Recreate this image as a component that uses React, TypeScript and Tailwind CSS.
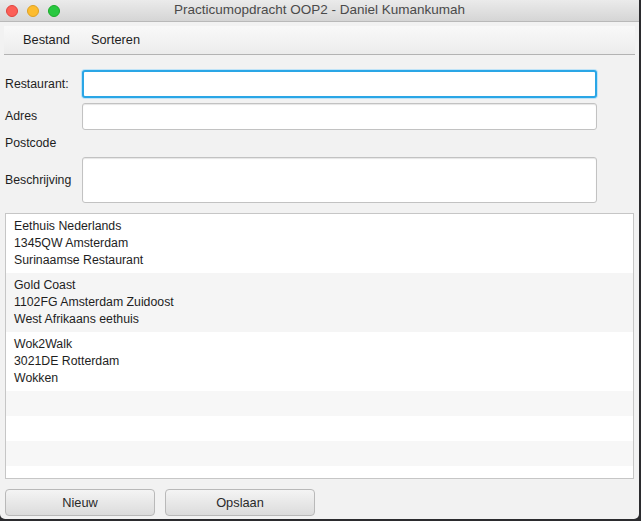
import React from "react"

type Restaurant = {
  naam: string
  adres: string
  beschrijving: string
}

const restaurants: Restaurant[] = [
  { naam: "Eethuis Nederlands", adres: "1345QW Amsterdam", beschrijving: "Surinaamse Restaurant" },
  { naam: "Gold Coast", adres: "1102FG Amsterdam Zuidoost", beschrijving: "West Afrikaans eethuis" },
  { naam: "Wok2Walk", adres: "3021DE Rotterdam", beschrijving: "Wokken" },
]

function Field({ label, children, className = "" }: { label: string; children?: React.ReactNode; className?: string }) {
  return (
    <div className={`flex items-center ${className}`}>
      <div className="w-[77px] shrink-0">{label}</div>
      {children}
    </div>
  )
}

export default function App() {
  return (
    <div
      className="w-[641px] h-[521px] bg-[#2b2b2e] overflow-hidden text-[12.3px] text-[#1e1e1e]"
      style={{ fontFamily: "'Liberation Sans', Arial, sans-serif" }}
    >
      <div className="w-[639px] h-[519px] bg-[#f2f2f2] rounded-b-[5px] flex flex-col">
        {/* title bar */}
        <div className="h-[22px] shrink-0 flex items-center relative bg-gradient-to-b from-[#ebebeb] to-[#d5d5d5] border-b border-[#b9b9b9]">
          <div className="flex gap-[9px] pl-[6px]">
            <span className="w-[12px] h-[12px] rounded-full bg-[#fc5f57] border border-[#e0443e]" />
            <span className="w-[12px] h-[12px] rounded-full bg-[#fdbc2e] border border-[#dea123]" />
            <span className="w-[12px] h-[12px] rounded-full bg-[#28c840] border border-[#1aab29]" />
          </div>
          <div className="absolute inset-0 flex items-center justify-center text-[13.5px] text-[#4a4a4a]">
            Practicumopdracht OOP2 - Daniel Kumankumah
          </div>
        </div>

        {/* menu bar */}
        <div className="mx-[4px] mt-[4px] h-[29px] shrink-0 flex items-center gap-[21px] pl-[19px] bg-gradient-to-b from-[#f9f9f9] to-[#ececec] border-b border-[#b3b3b3] text-[12.8px]">
          <span>Bestand</span>
          <span>Sorteren</span>
        </div>

        {/* form */}
        <div className="flex flex-col pl-[5px] pr-[42px] pt-[15px]">
          <Field label="Restaurant:" className="h-[28px]">
            <div className="flex-1 h-[28px] bg-white rounded-[3px] border-2 border-[#2aa6e6] shadow-[0_0_0_1px_#bfe3f7]" />
          </Field>
          <Field label="Adres" className="h-[27px] mt-[5px]">
            <div className="flex-1 h-[27px] bg-white rounded-[3px] border border-[#c2c2c2] shadow-[inset_0_1px_1px_#e6e6e6]" />
          </Field>
          <Field label="Postcode" className="h-[27px]" />
          <Field label="Beschrijving" className="h-[46px]">
            <div className="flex-1 h-[46px] bg-white rounded-[3px] border border-[#c2c2c2] shadow-[inset_0_1px_1px_#e6e6e6]" />
          </Field>
        </div>

        {/* list */}
        <div className="mx-[5px] mt-[10px] h-[266px] shrink-0 bg-white border border-[#c6c6c6] flex flex-col overflow-hidden">
          {restaurants.map((r, i) => (
            <div
              key={r.naam}
              className={`h-[59px] shrink-0 pl-[8px] pt-[4px] leading-[17px] ${i % 2 === 1 ? "bg-[#f5f5f5]" : "bg-white"}`}
            >
              <div>{r.naam}</div>
              <div>{r.adres}</div>
              <div>{r.beschrijving}</div>
            </div>
          ))}
          <div className="h-[25px] shrink-0 bg-[#f7f7f7]" />
          <div className="h-[25px] shrink-0 bg-white" />
          <div className="h-[25px] shrink-0 bg-[#f7f7f7]" />
          <div className="h-[25px] shrink-0 bg-white" />
        </div>

        {/* buttons */}
        <div className="flex gap-[10px] px-[5px] mt-[10px]">
          <button className="w-[150px] h-[27px] rounded-[4px] border border-[#b9b9b9] bg-gradient-to-b from-[#f4f4f4] to-[#dcdcdc] text-[12.8px] text-[#2a2a2a]">
            Nieuw
          </button>
          <button className="w-[150px] h-[27px] rounded-[4px] border border-[#b9b9b9] bg-gradient-to-b from-[#f4f4f4] to-[#dcdcdc] text-[12.8px] text-[#2a2a2a]">
            Opslaan
          </button>
        </div>
      </div>
    </div>
  )
}
